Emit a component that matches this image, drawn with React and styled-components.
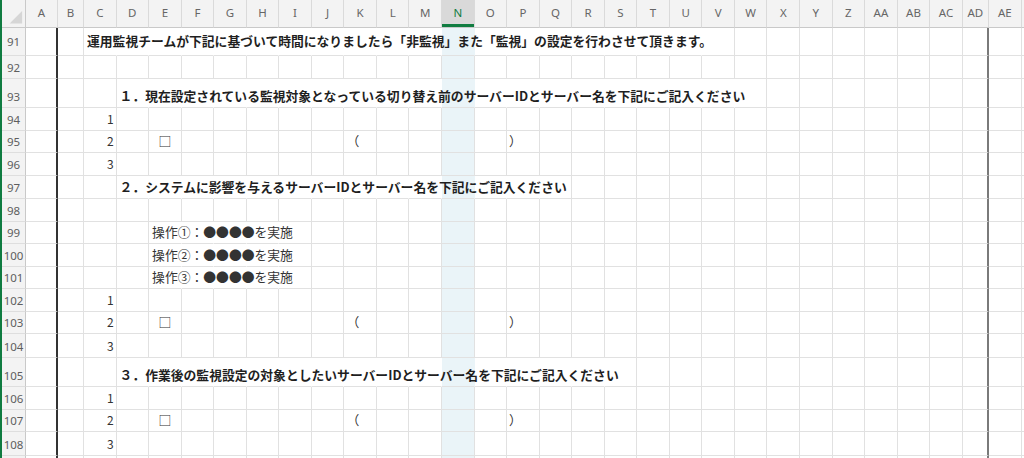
import React from "react";
import styled, { createGlobalStyle } from "styled-components";

const GlobalStyle = createGlobalStyle`
  html, body {
    margin: 0;
    padding: 0;
    background: #fff;
    overflow: hidden;
  }
`;

// last entry is the sliver of the next column at the window edge, no label
const COLS = [
  "A", "B", "C", "D", "E", "F", "G", "H", "I", "J", "K", "L", "M", "N", "O",
  "P", "Q", "R", "S", "T", "U", "V", "W", "X", "Y", "Z", "AA", "AB", "AC",
  "AD", "AE", "",
];

const TEMPLATE = "24px 32px 26px repeat(27, 32.556px) 26px 33px 40px";

const colIndex = (c) => COLS.indexOf(c);

const Sheet = styled.div`
  border-left: 2px solid #107c41;
  width: 1100px;
  font-family: "Noto Sans CJK JP", "Noto Sans", sans-serif;
`;

const HeaderRow = styled.div`
  display: grid;
  grid-template-columns: ${TEMPLATE};
  height: 28px;
  background: #f3f3f3;
`;

const Corner = styled.div`
  border-right: 1px solid #c9c9c9;
  border-bottom: 1px solid #c9c9c9;
  display: flex;
  align-items: flex-end;
  justify-content: flex-end;
`;

const ColHead = styled.div`
  display: flex;
  align-items: center;
  justify-content: center;
  padding-bottom: 2px;
  font-family: "Noto Sans", "Open Sans", sans-serif;
  font-size: 11.5px;
  color: ${(p) => (p.$sel ? "#107c41" : "#666")};
  background: ${(p) => (p.$sel ? "#d9d9d9" : "transparent")};
  border-right: 1px solid #dadada;
  border-bottom: 1px solid #c9c9c9;
  box-shadow: ${(p) => (p.$sel ? "inset 0 -3px 0 #107c41" : "none")};
`;

const Row = styled.div`
  display: grid;
  grid-template-columns: ${TEMPLATE};
  height: ${(p) => p.$h}px;
`;

const RowHead = styled.div`
  display: flex;
  align-items: flex-end;
  justify-content: center;
  padding-bottom: ${(p) => p.$pb}px;
  background: #f3f3f3;
  border-right: 1px solid #c9c9c9;
  border-bottom: 1px solid #dedede;
  font-family: "Noto Sans", "Open Sans", sans-serif;
  font-size: 11.5px;
  line-height: 14px;
  color: #5e5e5e;
`;

const edgeBorder = {
  dark: "2px solid #333",
  mid: "2px solid #7a7a7a",
};

const Cell = styled.div`
  display: flex;
  align-items: flex-end;
  justify-content: ${(p) =>
    p.$align === "right" ? "flex-end" : p.$align === "center" ? "center" : "flex-start"};
  padding: 0 2px ${(p) => p.$pb}px;
  min-width: 0;
  white-space: nowrap;
  background: ${(p) => (p.$sel ? "#eaf4f8" : "#fff")};
  border-bottom: 1px solid #e1e1e1;
  border-right: ${(p) =>
    p.$edge ? edgeBorder[p.$edge] : p.$bare ? "1px solid transparent" : "1px solid #e1e1e1"};
`;

const Text = styled.span`
  position: relative;
  z-index: 1;
  font-size: 12.8px;
  line-height: 16px;
  font-weight: ${(p) => (p.$bold ? 700 : 400)};
  color: ${(p) => (p.$bold ? "#1f1f1f" : "#333")};
  padding-left: ${(p) => p.$indent || 0}px;
`;

const Num = styled.span`
  font-size: 12px;
  line-height: 16px;
  color: #333;
`;

const TITLE_1 =
  "１．現在設定されている監視対象となっている切り替え前のサーバーIDとサーバー名を下記にご記入ください";
const TITLE_2 =
  "２．システムに影響を与えるサーバーIDとサーバー名を下記にご記入ください";
const TITLE_3 =
  "３．作業後の監視設定の対象としたいサーバーIDとサーバー名を下記にご記入ください";

const boxRow = [
  { col: "E", text: "□", align: "center" },
  { col: "K", text: "（" },
  { col: "P", text: "）" },
];

const ROWS = [
  {
    n: 91, h: 28, pb: 6,
    items: [
      {
        col: "C", through: "U", bold: true, indent: 1,
        text: "運用監視チームが下記に基づいて時間になりましたら「非監視」また「監視」の設定を行わさせて頂きます。",
      },
    ],
  },
  { n: 92, h: 23 },
  { n: 93, h: 29, items: [{ col: "D", through: "V", bold: true, indent: 1, text: TITLE_1 }] },
  { n: 94, h: 23, num: 1 },
  { n: 95, h: 22, num: 2, items: boxRow },
  { n: 96, h: 23, num: 3 },
  { n: 97, h: 23, items: [{ col: "D", through: "P", bold: true, indent: 1, text: TITLE_2 }] },
  { n: 98, h: 23 },
  { n: 99, h: 22, items: [{ col: "E", through: "H", indent: 1, text: "操作①：●●●●を実施" }] },
  { n: 100, h: 23, items: [{ col: "E", through: "H", indent: 1, text: "操作②：●●●●を実施" }] },
  { n: 101, h: 22, items: [{ col: "E", through: "H", indent: 1, text: "操作③：●●●●を実施" }] },
  { n: 102, h: 23, num: 1 },
  { n: 103, h: 22, num: 2, items: boxRow },
  { n: 104, h: 24, num: 3 },
  { n: 105, h: 29, items: [{ col: "D", through: "R", bold: true, indent: 1, text: TITLE_3 }] },
  { n: 106, h: 23, num: 1 },
  { n: 107, h: 22, num: 2, items: boxRow },
  { n: 108, h: 24, num: 3 },
  { n: 109, h: 23, hideNum: true },
];

const SheetRow = ({ n, h, pb = 3, num, hideNum, items = [] }) => {
  const spans = items
    .filter((it) => it.through)
    .map((it) => [colIndex(it.col), colIndex(it.through)]);

  return (
    <Row $h={h}>
      <RowHead $pb={pb}>{hideNum ? "" : n}</RowHead>
      {COLS.map((c, i) => {
        const item = items.find((it) => it.col === c);
        const bare = spans.some(([a, b]) => i >= a && i <= b);
        const edge = c === "A" ? "dark" : c === "AD" ? "mid" : null;
        const isNum = c === "C" && num;
        return (
          <Cell
            key={c || "edge"}
            $sel={c === "N"}
            $bare={bare}
            $edge={edge}
            $pb={pb}
            $align={isNum ? "right" : item?.align}
          >
            {isNum && <Num>{num}</Num>}
            {item && (
              <Text $bold={item.bold} $indent={item.indent}>
                {item.text}
              </Text>
            )}
          </Cell>
        );
      })}
    </Row>
  );
};

const App = () => (
  <>
    <GlobalStyle />
    <Sheet>
      <HeaderRow>
        <Corner>
          <svg width="24" height="27" viewBox="0 0 24 27">
            <polygon points="21,11 21,24 8,24" fill="#d6d6d6" />
          </svg>
        </Corner>
        {COLS.map((c) => (
          <ColHead key={c || "edge"} $sel={c === "N"}>
            {c}
          </ColHead>
        ))}
      </HeaderRow>
      {ROWS.map((r) => (
        <SheetRow key={r.n} {...r} />
      ))}
    </Sheet>
  </>
);

export default App;
